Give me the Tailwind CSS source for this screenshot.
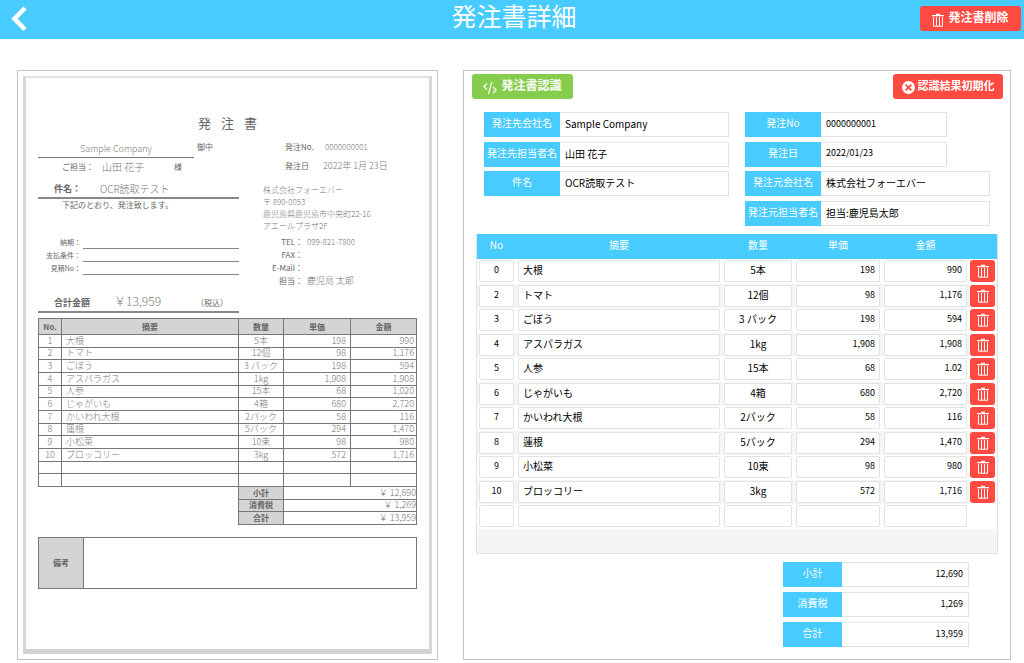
<!DOCTYPE html>
<html lang="ja">
<head>
    <meta charset="UTF-8">
    <meta name="viewport" content="width=device-width, initial-scale=1.0">
    <title>発注書詳細</title>
    <script src="https://cdn.jsdelivr.net/npm/@tailwindcss/browser@4"></script>
</head>
<body class="bg-white text-black text-[10px] font-['Noto_Sans_CJK_JP',sans-serif]">
    <!-- Shared icons -->
    <svg class="hidden">
        <symbol id="trash" viewBox="0 0 12 14">
            <path d="M0 2h12v1.2H0zM4 .8h4V2H4z" fill="currentColor"/>
            <path d="M1.5 4v9.2h9V4M4.5 4v9M7.5 4v9" fill="none" stroke="currentColor" stroke-width="1"/>
        </symbol>
    </svg>

    <!-- Header -->
    <header class="h-[39px] bg-[#48cbfe] text-white grid grid-cols-[1fr_auto_1fr] items-start pl-[7px] pr-[3px]">
        <a href="#" aria-label="戻る" class="pt-1.5 pl-1">
            <svg class="w-4 h-[26px]" viewBox="0 0 16 26"><path d="M14 2 3.5 12.7 14 23.5" fill="none" stroke="currentColor" stroke-width="4.6"/></svg>
        </a>
        <h1 class="text-[25px] leading-[35px] font-['Liberation_Sans','Noto_Sans_CJK_JP',sans-serif]">発注書詳細</h1>
        <button type="button" class="justify-self-end mt-[6px] w-[101px] h-[25px] rounded-[3px] bg-[#ff4a41] flex items-center justify-center gap-1 text-xs leading-[18px] font-bold">
            <svg class="w-3 h-3.5 mt-0.5"><use href="#trash"/></svg>
            <span class="pb-[3px]">発注書削除</span>
        </button>
    </header>

    <main class="grid grid-cols-[421fr_548fr] gap-[25px] pl-[17px] pr-[13px] pt-[31px]">
        <!-- Scanned order sheet -->
        <section class="border border-[#c4c4c4] p-[5px]">
            <div class="h-full border-x-[3px] border-t-2 border-b-[5px] border-t-[#e0e0e0] border-x-[#d6d6d6] border-b-[#d2d2d2] px-3 pt-[37px] text-[8px] text-[#666]">
                <h2 class="flex justify-center gap-[10px] text-[13px] leading-4"><span>発</span><span>注</span><span>書</span></h2>
                <div class="flex gap-6">
                    <div class="w-[201px] pt-[10px]">
                        <div class="flex gap-[3px]">
                            <p class="w-[156px] h-[17px] leading-4 border-b border-[#777] text-center text-[9px] font-light text-[#777]">Sample Company</p>
                            <p class="leading-3">御中</p>
                        </div>
                        <div class="flex h-[18px] leading-[18px] pl-6">
                            <p class="w-10">ご担当：</p>
                            <p class="w-[72px] text-[10px] font-light text-[#777]">山田 花子</p>
                            <p>様</p>
                        </div>
                        <div class="flex items-end h-[23px] leading-4 border-b-2 border-[#888] pl-4">
                            <p class="w-[46px] text-[9px] font-bold">件名：</p>
                            <p class="text-[10px] font-light text-[#777]">OCR読取テスト</p>
                        </div>
                        <p class="leading-3 pl-6">下記のとおり、発注致します。</p>
                        <div class="mt-[25px] leading-[13px]">
                            <div class="flex gap-0.5 h-[13px]"><p class="w-[43px] text-right text-[7px]">納期：</p><p class="flex-1 border-b border-[#888]"></p></div>
                            <div class="flex gap-0.5 h-[13px]"><p class="w-[43px] text-right text-[7px]">支払条件：</p><p class="flex-1 border-b border-[#888]"></p></div>
                            <div class="flex gap-0.5 h-[13px]"><p class="w-[43px] text-right text-[7px]">見積No：</p><p class="flex-1 border-b border-[#888]"></p></div>
                        </div>
                        <div class="mt-5 flex h-[18px] leading-4 border-b-2 border-[#888] pl-4">
                            <p class="w-[60px] text-[9px] font-bold">合計金額</p>
                            <p class="flex-1 text-[12px] leading-3 font-light text-[#777]">￥13,959</p>
                            <p class="w-[43px]">（税込）</p>
                        </div>
                    </div>
                    <div class="flex-1 pt-[10px] leading-3 whitespace-nowrap">
                        <div class="flex pl-[22px]"><p class="w-10">発注No.</p><p class="font-light text-[#777]">0000000001</p></div>
                        <div class="flex pl-[22px] mt-[7px]"><p class="w-[38px]">発注日</p><p class="text-[9px] font-light text-[#777]">2022年 1月 23日</p></div>
                        <div class="mt-3 font-light text-[#777]">
                            <p>株式会社フォーエバー</p>
                            <p>〒 890-0053</p>
                            <p>鹿児島県鹿児島市中央町22-16</p>
                            <p>アエールプラザ2F</p>
                        </div>
                        <div class="mt-[3px] leading-[13px]">
                            <div class="flex h-[13px] gap-1"><p class="w-10 text-right">TEL：</p><p class="font-light text-[#777]">099-821-7800</p></div>
                            <div class="flex h-[13px] gap-1"><p class="w-10 text-right">FAX：</p></div>
                            <div class="flex h-[13px] gap-1"><p class="w-10 text-right">E-Mail：</p></div>
                            <div class="flex h-[13px] gap-1"><p class="w-10 text-right">担当：</p><p class="text-[9px] font-light text-[#777]">鹿児島 太郎</p></div>
                        </div>
                    </div>
                </div>

                <table class="mt-[5px] w-full h-[169px] table-fixed border-collapse leading-[10px]">
                    <colgroup><col class="w-[23px]"><col><col class="w-[45px]"><col class="w-[67px]"><col class="w-[66px]"></colgroup>
                    <thead class="bg-[#d4d4d4] font-bold">
                        <tr class="h-4">
                            <th class="border border-[#777]">No.</th><th class="border border-[#777]">摘要</th><th class="border border-[#777]">数量</th><th class="border border-[#777]">単価</th><th class="border border-[#777]">金額</th>
                        </tr>
                    </thead>
                    <tbody id="sheet" class="text-[9px] font-light text-[#777]"></tbody>
                </table>
                <table class="-mt-px ml-auto w-[179px] h-[39px] table-fixed border-collapse leading-[10px]">
                    <colgroup><col class="w-[45px]"><col></colgroup>
                    <tr><th class="border border-[#777] bg-[#d4d4d4]">小計</th><td class="border border-[#777] text-right text-[9px] font-light text-[#777]">￥ 12,690</td></tr>
                    <tr><th class="border border-[#777] bg-[#d4d4d4]">消費税</th><td class="border border-[#777] text-right text-[9px] font-light text-[#777]">￥ 1,269</td></tr>
                    <tr><th class="border border-[#777] bg-[#d4d4d4]">合計</th><td class="border border-[#777] text-right text-[9px] font-light text-[#777]">￥ 13,959</td></tr>
                </table>
                <div class="mt-3 flex h-[52px] border border-[#777]">
                    <p class="w-[45px] border-r border-[#777] bg-[#d4d4d4] font-bold flex items-center justify-center">備考</p>
                </div>
            </div>
        </section>

        <!-- Recognized result -->
        <section class="border border-[#c4c4c4] pt-[3px] pb-3">
            <div class="flex justify-between pl-2 pr-[7px] text-white font-bold">
                <button type="button" class="w-[101px] h-[25px] rounded-[3px] bg-[#87cd4d] flex items-center justify-center gap-1 text-xs leading-[18px]">
                    <svg class="w-3.5 h-3.5 mt-0.5" viewBox="0 0 14 14"><path d="M4 2.5.8 5.5 4 8.5M10 6l3.2 3L10 12M8.8 1 5.4 13.2" fill="none" stroke="currentColor" stroke-width="1.2"/></svg>
                    <span class="pb-[3px]">発注書認識</span>
                </button>
                <button type="button" class="w-[110px] h-[25px] rounded-[3px] bg-[#ff4a41] flex items-center justify-center gap-[3px] text-[11px] leading-[18px]">
                    <svg class="w-[13px] h-[13px] mt-0.5" viewBox="0 0 12 12"><circle cx="6" cy="6" r="6" fill="white"/><path d="m3.3 3.3 5.4 5.4m0-5.4-5.4 5.4" stroke="#ff4a41" stroke-width="1.6"/></svg>
                    <span class="pb-[3px]">認識結果初期化</span>
                </button>
            </div>

            <form class="mt-[13px] mx-5 grid grid-cols-2 gap-x-4 content-between h-[114px]">
                <div class="flex h-[25px]">
                    <label for="toCompany" class="w-[76px] bg-[#48cbfe] text-white text-center leading-[22px]">発注先会社名</label>
                    <input id="toCompany" value="Sample Company" class="flex-1 min-w-0 border border-l-0 border-[#e2e2e2] px-[5px] pb-0.5">
                </div>
                <div class="flex h-[25px] w-[202px]">
                    <label for="orderNo" class="w-[76px] bg-[#48cbfe] text-white text-center leading-[22px]">発注No</label>
                    <input id="orderNo" value="0000000001" class="flex-1 min-w-0 border border-l-0 border-[#e2e2e2] px-[5px] pb-0.5 text-[9px]">
                </div>
                <div class="flex h-[25px]">
                    <label for="toPerson" class="w-[76px] bg-[#48cbfe] text-white text-center leading-[22px]">発注先担当者名</label>
                    <input id="toPerson" value="山田 花子" class="flex-1 min-w-0 border border-l-0 border-[#e2e2e2] px-[5px] pb-0.5">
                </div>
                <div class="flex h-[25px] w-[202px]">
                    <label for="orderDate" class="w-[76px] bg-[#48cbfe] text-white text-center leading-[22px]">発注日</label>
                    <input id="orderDate" value="2022/01/23" class="flex-1 min-w-0 border border-l-0 border-[#e2e2e2] px-[5px] pb-0.5 text-[9px]">
                </div>
                <div class="flex h-[25px]">
                    <label for="subject" class="w-[76px] bg-[#48cbfe] text-white text-center leading-[22px]">件名</label>
                    <input id="subject" value="OCR読取テスト" class="flex-1 min-w-0 border border-l-0 border-[#e2e2e2] px-[5px] pb-0.5">
                </div>
                <div class="flex h-[25px]">
                    <label for="fromCompany" class="w-[76px] bg-[#48cbfe] text-white text-center leading-[22px]">発注元会社名</label>
                    <input id="fromCompany" value="株式会社フォーエバー" class="flex-1 min-w-0 border border-l-0 border-[#e2e2e2] px-[5px] pb-0.5">
                </div>
                <div class="col-start-2 flex h-[25px]">
                    <label for="fromPerson" class="w-[76px] bg-[#48cbfe] text-white text-center leading-[22px]">発注元担当者名</label>
                    <input id="fromPerson" value="担当:鹿児島太郎" class="flex-1 min-w-0 border border-l-0 border-[#e2e2e2] px-[5px] pb-0.5">
                </div>
            </form>

            <div class="mt-2 mx-3 border-x border-b border-[#e2e2e2]">
                <table class="w-full h-[319px] table-fixed">
                    <colgroup><col class="w-[39px]"><col><col class="w-[72px]"><col class="w-[88px]"><col class="w-[87px]"><col class="w-7"></colgroup>
                    <thead class="bg-[#48cbfe] text-white leading-[22px]">
                        <tr class="h-[25px] align-top">
                            <th class="font-normal">No</th><th class="font-normal">摘要</th><th class="font-normal">数量</th><th class="font-normal">単価</th><th class="font-normal">金額</th><th></th>
                        </tr>
                    </thead>
                    <tbody id="items"></tbody>
                </table>
            </div>

            <div class="mt-2 mr-[41px] ml-auto w-[186px] h-[85px] flex flex-col justify-between">
                <div class="flex h-[25px]">
                    <label for="subtotal" class="w-[59px] bg-[#48cbfe] text-white text-center leading-[22px]">小計</label>
                    <input id="subtotal" value="12,690" class="flex-1 min-w-0 border border-l-0 border-[#e2e2e2] px-[5px] pb-0.5 text-right text-[9px]">
                </div>
                <div class="flex h-[25px]">
                    <label for="tax" class="w-[59px] bg-[#48cbfe] text-white text-center leading-[22px]">消費税</label>
                    <input id="tax" value="1,269" class="flex-1 min-w-0 border border-l-0 border-[#e2e2e2] px-[5px] pb-0.5 text-right text-[9px]">
                </div>
                <div class="flex h-[25px]">
                    <label for="total" class="w-[59px] bg-[#48cbfe] text-white text-center leading-[22px]">合計</label>
                    <input id="total" value="13,959" class="flex-1 min-w-0 border border-l-0 border-[#e2e2e2] px-[5px] pb-0.5 text-right text-[9px]">
                </div>
            </div>
        </section>
    </main>

    <script>
        // No, name, quantity, unit price, amount
        const items = [
            ['0', '大根', '5本', '198', '990'],
            ['2', 'トマト', '12個', '98', '1,176'],
            ['3', 'ごぼう', '3 パック', '198', '594'],
            ['4', 'アスパラガス', '1kg', '1,908', '1,908'],
            ['5', '人参', '15本', '68', '1.02'],
            ['6', 'じゃがいも', '4箱', '680', '2,720'],
            ['7', 'かいわれ大根', '2パック', '58', '116'],
            ['8', '蓮根', '5パック', '294', '1,470'],
            ['9', '小松菜', '10東', '98', '980'],
            ['10', 'ブロッコリー', '3kg', '572', '1,716'],
            ['', '', '', '', '']
        ];
        const cell = 'block w-full h-[22px] bg-white border border-[#e2e2e2] rounded-[2px] px-1 pb-[3px]';
        const align = ['text-center text-[9px]', 'text-left', 'text-center', 'text-right text-[9px]', 'text-right text-[9px]'];
        const names = ['No', '摘要', '数量', '単価', '金額'];
        document.getElementById('items').innerHTML = items.map((row) => `
            <tr class="h-6 even:bg-[#f5f5f5]">
                ${row.map((v, i) => `<td class="px-0.5"><input aria-label="${names[i]}" value="${v}" class="${cell} ${align[i]}"></td>`).join('')}
                <td class="px-px">${row[0] ? `<button type="button" aria-label="削除" class="flex items-center justify-center w-[25px] h-[22px] rounded-[3px] bg-[#ff4a41] text-white"><svg class="w-3 h-3.5"><use href="#trash"/></svg></button>` : ''}</td>
            </tr>`).join('') + '<tr class="h-6 bg-[#f5f5f5]"><td colspan="6"></td></tr>';

        // Handwritten rows on the sheet
        const sheet = items.slice(0, 10).map((r, i) => [i + 1, ...r.slice(1)]);
        sheet[4][4] = '1,020';
        sheet[8][2] = '10束';
        sheet.push(['', '', '', '', ''], ['', '', '', '', '']);
        const sheetAlign = ['text-center', 'pl-1', 'text-center', 'text-right pr-1', 'text-right pr-0.5'];
        document.getElementById('sheet').innerHTML = sheet.map((row) =>
            `<tr class="h-3">${row.map((v, i) => `<td class="border border-[#777] ${sheetAlign[i]}">${v}</td>`).join('')}</tr>`
        ).join('');
    </script>
</body>
</html>
